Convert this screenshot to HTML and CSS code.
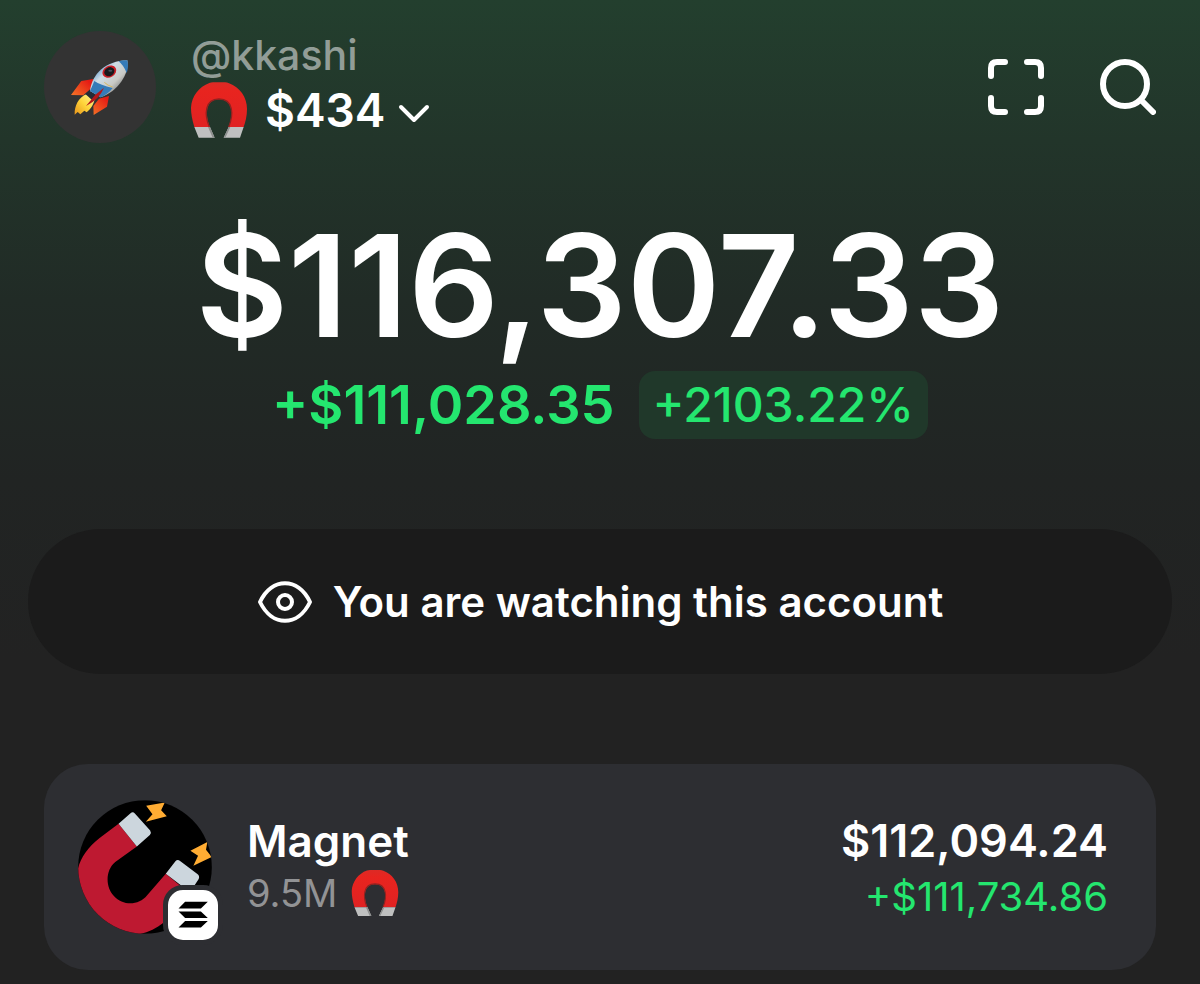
FILE: index.html
```html
<!DOCTYPE html>
<html lang="en">
<head>
<meta charset="utf-8">
<meta name="viewport" content="width=device-width, initial-scale=1">
<title>Portfolio</title>
<link rel="stylesheet" href="styles.css">
</head>
<body>
<svg class="defs" aria-hidden="true">
  <defs>
    <linearGradient id="red" x1="0" y1="0" x2="0" y2="1"><stop offset="0" stop-color="#dd2a25"/><stop offset=".2" stop-color="#e8241f"/><stop offset="1" stop-color="#e02222"/></linearGradient>
    <symbol id="magnet" viewBox="0 0 168 166">
      <path fill="url(#red)" d="M10 134C3 110 0 92 0 76C2 42 24 13 55 2Q60 0 66 0H102Q108 0 114 3C146 15 168 44 168 80C168 102 163 120 158 134H113C128 98 126 51 84 51C42 51 42 98 57 134Z"/>
      <path fill="none" stroke="#8f2320" stroke-width="4" d="M55 134C40 98 40 50 84 50C128 50 128 98 113 134"/>
      <path fill="#bfc0c0" d="M10 134H57L71 166H23ZM113 134H158L147 166H98Z"/>
      <path fill="#8d8f8e" d="M57 134L71 166H65L51 134ZM113 134L98 166H103L118 134Z"/>
    </symbol>
  </defs>
</svg>
<main class="screen">
  <header class="top">
    <div class="avatar">
      <svg class="rocket" viewBox="120 105 180 180" role="img" aria-label="Rocket">
        <defs>
          <linearGradient id="hull" x1="0" y1="0" x2="1" y2="1"><stop offset=".15" stop-color="#4f8fc8"/><stop offset=".38" stop-color="#cfdde5"/><stop offset=".62" stop-color="#c9c9c5"/><stop offset=".85" stop-color="#686b6d"/></linearGradient>
          <linearGradient id="fin" x1="1" y1="0" x2="0" y2="1"><stop offset=".3" stop-color="#e51b14"/><stop offset="1" stop-color="#ffae32"/></linearGradient>
          <linearGradient id="flame" x1="1" y1="0" x2="0" y2="1"><stop offset="0" stop-color="#fff49b"/><stop offset=".5" stop-color="#ffd63b"/><stop offset="1" stop-color="#e7941b"/></linearGradient>
        </defs>
        <path fill="url(#fin)" d="M190 171L154 177L123 219L160 220L187 196ZM207 230L237 222L231 254L191 279L190 252Z"/>
        <path fill="url(#flame)" d="M170 216C145 227 133 251 134 278L143 270L151 277L163 266L170 271C184 259 193 244 194 228Z"/>
        <path fill="#252b37" d="M166 216L181 203L203 225L186 234Z"/>
        <path fill="url(#hull)" d="M180 207C185 158 226 116 292 115C299 154 264 209 212 226Z"/>
        <path fill="#357bb8" d="M266 118Q279 114 292 115Q297 133 290 153Q281 130 266 118ZM193 177Q211 189 248 198Q234 217 212 226L180 207Z"/>
        <path fill="#b4171b" d="M222 197L196 218L168 252Q208 232 222 197Z"/>
        <path fill="none" stroke="#d7ba62" stroke-width="3" d="M223 181Q233 191 248 195"/>
        <ellipse cx="238" cy="149" rx="22" ry="17" fill="#c91f27" transform="rotate(-30 238 149)"/>
        <ellipse cx="238" cy="149" rx="16" ry="13" fill="#17191c" transform="rotate(-30 238 149)"/>
        <ellipse cx="241" cy="146" rx="6" ry="3" fill="#47505a"/>
      </svg>
    </div>
    <div class="account">
      <span class="handle">@kkashi</span>
      <button class="picker" type="button">
        <svg class="magnet-large" aria-hidden="true"><use href="#magnet"/></svg>
        <span>$434</span>
        <svg class="chevron" viewBox="0 0 32 20" aria-hidden="true"><path d="M3 3L16 16L29 3"/></svg>
      </button>
    </div>
    <div class="actions">
      <button class="icon-button" type="button" aria-label="Scan">
        <svg class="line-icon" viewBox="0 0 56 56"><path d="M17 3H9Q3 3 3 9V17M39 3H47Q53 3 53 9V17M3 39V47Q3 53 9 53H17M53 39V47Q53 53 47 53H39"/></svg>
      </button>
      <button class="icon-button" type="button" aria-label="Search">
        <svg class="line-icon" viewBox="0 0 56 56"><circle cx="25" cy="25" r="22"/><path d="M41 41L53 53"/></svg>
      </button>
    </div>
  </header>

  <section class="summary">
    <h1 class="balance">$116,307.33</h1>
    <div class="change">
      <span>+$111,028.35</span>
      <span class="percent">+2103.22%</span>
    </div>
  </section>

  <button class="watching" type="button">
    <svg class="eye" viewBox="0 0 56 44" aria-hidden="true"><path d="M3 22C15-3 41-3 53 22C41 47 15 47 3 22Z"/><circle cx="28" cy="22" r="7"/></svg>
    <span>You are watching this account</span>
  </button>

  <article class="token">
    <div class="token-icon">
      <svg class="token-art" viewBox="53 59 403 402" role="img" aria-label="Magnet token">
        <defs><clipPath id="disc"><circle cx="254.500" cy="260" r="201"/></clipPath></defs>
        <g clip-path="url(#disc)">
          <rect x="53" y="59" width="403" height="402" fill="#000"/>
          <path fill="#be1931" d="M175 130L118 173C30 240 30 340 90 410C140 478 245 482 310 428L385 340L365 320L317 280L261 345C235 377 188 377 161 347C135 320 135 270 165 245L230 198Z"/>
          <path fill="#ccd6dd" d="M175 130L211 98Q218 92 224 99L270 150Q275 157 269 164L230 198ZM317 280L346 243Q352 236 360 242L412 281Q420 287 416 296L390 336Z"/>
          <path fill="#ffac33" d="M258 76L314 66L303 89L320 107L257 124L277 101ZM391 211L442 185L438 208L455 230L400 256L414 226Z"/>
        </g>
      </svg>
      <svg class="chain" viewBox="322 327 152 152" role="img" aria-label="Solana"><path d="M374 363H443L422 383H354ZM354 392H422L443 412H374ZM374 421H443L422 441H354Z"/></svg>
    </div>
    <div class="token-info">
      <h2 class="token-name">Magnet</h2>
      <div class="amount"><span>9.5M</span><svg class="magnet-small" aria-hidden="true"><use href="#magnet"/></svg></div>
    </div>
    <div class="token-value">
      <span class="value">$112,094.24</span>
      <span class="gain">+$111,734.86</span>
    </div>
  </article>
</main>
</body>
</html>
```
FILE: styles.css
```css
* { box-sizing: border-box; }

body {
  margin: 0;
  min-height: 100vh;
  background: #222 linear-gradient(#233f2e 0, #22352a 140px, #212b26 300px, #212423 480px, #222 660px) no-repeat;
  color: #fff;
  font-family: Inter, "Liberation Sans", sans-serif;
}

button {
  padding: 0;
  border: 0;
  background: none;
  color: inherit;
  font: inherit;
}

svg { display: block; flex: none; }
h1, h2 { margin: 0; font-weight: 600; }

.defs { position: absolute; width: 0; height: 0; }
.screen { padding: 30px 28px 14px; }

.top {
  display: flex;
  align-items: center;
  padding: 0 16px;
}

.avatar {
  display: grid;
  place-items: center;
  width: 112px;
  height: 112px;
  border-radius: 50%;
  background: #333;
}
.rocket { width: 60px; height: 60px; }

.account {
  display: flex;
  flex-direction: column;
  align-items: flex-start;
  margin-left: 35px;
}
.handle {
  color: #929d97;
  font-size: 41px;
  font-weight: 500;
  line-height: 50px;
}
.picker {
  display: flex;
  align-items: center;
  margin-bottom: 4px;
  font-size: 46px;
  font-weight: 600;
  line-height: 60px;
}
.magnet-large { width: 56px; height: 56px; margin-right: 18px; }
.chevron { width: 32px; height: 20px; margin: 8px 0 0 13px; }

.chevron, .line-icon, .eye {
  fill: none;
  stroke: #fff;
  stroke-linecap: round;
  stroke-linejoin: round;
}
.chevron { stroke-width: 4; }

.actions {
  display: flex;
  gap: 56px;
  margin-left: auto;
}
.line-icon { width: 56px; height: 56px; stroke-width: 6; }

.summary {
  display: flex;
  flex-direction: column;
  align-items: center;
  gap: 14px;
  padding: 69px 0 90px;
}
.balance { font-size: 142px; line-height: 144px; }
.change {
  display: flex;
  align-items: center;
  gap: 24px;
  color: #24e66f;
  font-size: 54px;
  font-weight: 600;
  line-height: 68px;
}
.percent {
  padding: 0 14px;
  border-radius: 16px;
  background: #20382a;
  font-size: 48px;
  font-weight: 500;
}

.watching {
  display: flex;
  align-items: center;
  justify-content: center;
  gap: 20px;
  width: 100%;
  min-height: 145px;
  border-radius: 73px;
  background: #1b1b1b;
  font-size: 42px;
  font-weight: 600;
}
.eye { width: 56px; height: 44px; stroke-width: 4; }

.token {
  display: flex;
  align-items: center;
  margin: 90px 16px 0;
  padding: 36px 48px 36px 34px;
  border-radius: 44px;
  background: #2d2e32;
}
.token-icon { position: relative; }
.token-art { width: 134px; height: 134px; }
.chain {
  position: absolute;
  right: -11px;
  bottom: -11px;
  width: 60px;
  height: 60px;
  border: 5px solid #2d2e32;
  border-radius: 20px;
  background: #fff;
}
.token-info { margin-left: 35px; }
.token-name { font-size: 44px; line-height: 52px; }
.amount {
  display: flex;
  align-items: center;
  gap: 14px;
  color: #929395;
  font-size: 38px;
  line-height: 52px;
}
.magnet-small { width: 48px; height: 46px; }

.token-value {
  display: flex;
  flex-direction: column;
  align-items: flex-end;
  margin-left: auto;
  padding-top: 4px;
  line-height: 56px;
}
.value { font-size: 45px; font-weight: 600; }
.gain { color: #24e66f; font-size: 40px; }
```
